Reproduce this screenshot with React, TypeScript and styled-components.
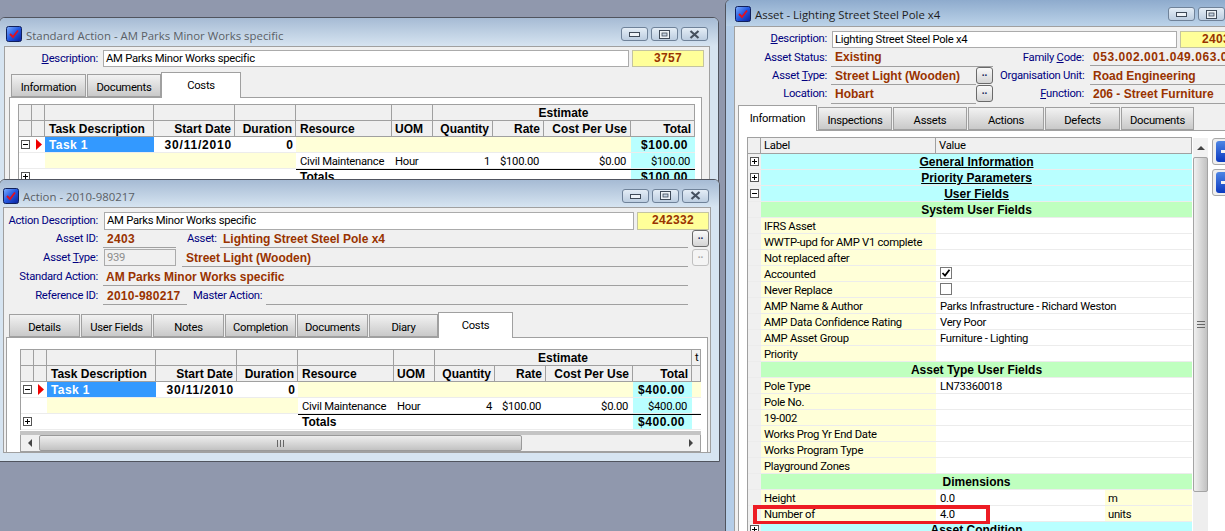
import React from "react";
import styled, { createGlobalStyle } from "styled-components";

const UI = '"Liberation Sans", Arial, sans-serif';
const TEXT = 'Roboto, "Liberation Sans", Arial, sans-serif';
const LINE = "#a0a0a0";
const CREAM = "#ffffd8";
const CYAN = "#b9ffff";
const GREEN = "#bfffbf";
const BROWN = "#993300";
const BOLD = `font-family: ${UI}; font-size: 12px; font-weight: 700; letter-spacing: 0;`;
const PLAIN = `font-family: ${TEXT}; font-size: 11.25px; font-weight: 400; letter-spacing: -0.27px;`;

const Global = createGlobalStyle`
  html, body { margin: 0; padding: 0; background: #9098ad; overflow: hidden; }
  * { box-sizing: border-box; }
`;

const Desktop = styled.div`
  position: relative;
  width: 1225px;
  height: 531px;
  overflow: hidden;
  background: #9098ad;
  ${PLAIN}
  line-height: 15px;
  color: #000;
`;

const Shell = styled.section<{ $x: number; $y: number; $w: number; $h: number; $active?: boolean }>`
  position: absolute;
  left: ${(p) => p.$x}px;
  top: ${(p) => p.$y}px;
  width: ${(p) => p.$w}px;
  height: ${(p) => p.$h}px;
  display: flex;
  flex-direction: column;
  border: 1px solid #50545e;
  border-radius: 6px 6px 0 0;
  background: ${(p) => (p.$active ? "#b4cde8" : "#d6e4f1")};
  overflow: hidden;
`;

const TitleBar = styled.header<{ $h: number; $pad: number; $pt: number; $active?: boolean }>`
  flex: none;
  height: ${(p) => p.$h}px;
  display: flex;
  align-items: center;
  padding: ${(p) => p.$pt}px 10px 0 ${(p) => p.$pad}px;
  background: ${(p) =>
    p.$active
      ? "linear-gradient(#8eabcd, #bcd3e9)"
      : "linear-gradient(#a6bbd4, #d6e4f1)"};
`;

const TitleText = styled.h1<{ $active?: boolean; $tp: number }>`
  flex: 1;
  margin: 0 0 0 4px;
  padding-top: ${(p) => p.$tp}px;
  font: 400 11.4px/16px "Open Sans", ${UI};
  letter-spacing: 0;
  color: ${(p) => (p.$active ? "#1d1d1d" : "#5a5f66")};
  white-space: nowrap;
`;

const Controls = styled.div`
  display: flex;
  gap: 3px;
`;

const ControlButton = styled.div`
  width: 27px;
  height: 14px;
  display: flex;
  align-items: center;
  justify-content: center;
  border: 1px solid #6f8299;
  border-radius: 3px;
  background: linear-gradient(#e4edf6, #bccde0);
`;

const Client = styled.main<{ $ml: number; $bottom?: number }>`
  flex: 1;
  min-height: 0;
  margin: 0 8px ${(p) => p.$bottom ?? 0}px ${(p) => p.$ml}px;
  border: 1px solid ${LINE};
  background: #f0f0f0;
  overflow: hidden;
`;

const FormBlock = styled.div<{ $pt: number }>`
  padding-top: ${(p) => p.$pt}px;
  display: flex;
  flex-direction: column;
`;

const FormRows = styled.div`
  display: flex;
  flex-direction: column;
  gap: 1px;
`;

const FieldRow = styled.div<{ $h?: number }>`
  display: flex;
  align-items: flex-start;
  height: ${(p) => p.$h ?? 18}px;
`;

const FieldGroup = styled.div<{ $w: number }>`
  flex: none;
  width: ${(p) => p.$w}px;
  display: flex;
  align-items: flex-start;
`;

const Label = styled.label<{ $w: number; $ml?: number; $lh?: number }>`
  flex: none;
  width: ${(p) => p.$w}px;
  margin-left: ${(p) => p.$ml ?? 0}px;
  color: #000080;
  text-align: right;
  white-space: nowrap;
  line-height: ${(p) => p.$lh ?? 18}px;
  u { text-underline-offset: 1px; }
`;

const TextBox = styled.div<{ $w: number; $ml: number; $h?: number }>`
  flex: none;
  width: ${(p) => p.$w}px;
  height: ${(p) => p.$h ?? 17}px;
  margin-left: ${(p) => p.$ml}px;
  padding-left: 2px;
  border: 1px solid #ababab;
  background: #fff;
  line-height: 15px;
  white-space: nowrap;
`;

const DisabledBox = styled(TextBox)`
  background: #f0f0f0;
  color: #8d8d8d;
`;

const IdBox = styled.div<{ $h?: number }>`
  flex: none;
  width: 72px;
  height: ${(p) => p.$h ?? 17}px;
  margin-left: 3px;
  border: 1px solid #c4c4a0;
  background: #ffff99;
  color: ${BROWN};
  ${BOLD}
  letter-spacing: 0.3px;
  text-align: center;
  line-height: 15px;
`;

const Value = styled.div<{ $w?: number; $ml: number; $pl?: number; $h?: number; $lh?: number; $ls?: number }>`
  flex: ${(p) => (p.$w ? "none" : "1")};
  width: ${(p) => (p.$w ? `${p.$w}px` : "auto")};
  height: ${(p) => p.$h ?? 18}px;
  margin-left: ${(p) => p.$ml}px;
  padding-left: ${(p) => p.$pl ?? 4}px;
  border-bottom: 1px solid ${LINE};
  color: ${BROWN};
  ${BOLD}
  letter-spacing: ${(p) => p.$ls ?? 0}px;
  line-height: ${(p) => p.$lh ?? 18}px;
  white-space: nowrap;
`;

const DotsButton = styled.button<{ $ml?: number; $off?: boolean }>`
  flex: none;
  width: 17px;
  height: 17px;
  margin-left: ${(p) => p.$ml ?? 0}px;
  padding: 0 0 5px;
  border: 1px solid ${(p) => (p.$off ? "#c0c0c0" : "#6a6a6a")};
  border-radius: 3px;
  background: ${(p) => (p.$off ? "#f4f4f4" : "linear-gradient(#fafafa, #d4d4d4)")};
  color: ${(p) => (p.$off ? "#a8a8a8" : "#1c2c5c")};
  font: 700 10px/10px ${UI};
`;

const TabBar = styled.nav<{ $mt: number; $ml: number }>`
  display: flex;
  align-items: flex-end;
  gap: 1px;
  height: 25px;
  margin: ${(p) => p.$mt}px 0 0 ${(p) => p.$ml}px;
  position: relative;
  z-index: 1;
`;

const Tab = styled.div<{ $w: number; $active?: boolean }>`
  flex: none;
  width: ${(p) => p.$w}px;
  height: ${(p) => (p.$active ? 26 : 23)}px;
  margin: 0 0 ${(p) => (p.$active ? -1 : 0)}px ${(p) => (p.$active ? -1 : 0)}px;
  border: 1px solid ${LINE};
  border-bottom: ${(p) => (p.$active ? "none" : `1px solid ${LINE}`)};
  background: ${(p) => (p.$active ? "#fff" : "linear-gradient(#f2f2f2, #c9c9c9)")};
  text-align: center;
  line-height: ${(p) => (p.$active ? 25 : 26)}px;
  white-space: nowrap;
  overflow: hidden;
`;

const Pane = styled.div<{ $ml: number; $w: number; $pt: number; $pl: number }>`
  width: ${(p) => p.$w}px;
  height: 500px;
  margin-left: ${(p) => p.$ml}px;
  padding: ${(p) => p.$pt}px 0 0 ${(p) => p.$pl}px;
  border: 1px solid ${LINE};
  background: #fff;
`;

const Grid = styled.div<{ $cols: string }>`
  display: grid;
  grid-template-columns: ${(p) => p.$cols};
  grid-auto-rows: 16px;
  width: max-content;
  border-top: 1px solid ${LINE};
  border-left: 1px solid ${LINE};
`;

const Head = styled.div<{ $span?: number; $align?: string; $plain?: boolean; $pl?: number }>`
  grid-column: span ${(p) => p.$span ?? 1};
  padding: 0 3px 0 ${(p) => p.$pl ?? 3}px;
  border-right: 1px solid ${LINE};
  border-bottom: 1px solid ${LINE};
  background: #f0f0f0;
  ${(p) => (p.$plain ? PLAIN : BOLD)}
  line-height: 16px;
  text-align: ${(p) => p.$align ?? "left"};
  white-space: nowrap;
  overflow: hidden;
`;

const Cell = styled.div<{
  $span?: number;
  $bg?: string;
  $align?: string;
  $bold?: boolean;
  $pl?: number;
  $pr?: number;
  $top?: boolean;
  $fg?: string;
  $under?: boolean;
  $ls?: number;
}>`
  grid-column: span ${(p) => p.$span ?? 1};
  padding: 0 ${(p) => p.$pr ?? 3}px 0 ${(p) => p.$pl ?? 3}px;
  border-bottom: 1px solid #ececec;
  border-top: ${(p) => (p.$top ? "1px solid #000" : "none")};
  background: ${(p) => p.$bg ?? "#fff"};
  color: ${(p) => p.$fg ?? "#000"};
  ${(p) => (p.$bold ? BOLD : PLAIN)}
  ${(p) => (p.$ls !== undefined ? `letter-spacing: ${p.$ls}px;` : "")}
  text-align: ${(p) => p.$align ?? "left"};
  text-decoration: ${(p) => (p.$under ? "underline" : "none")};
  line-height: ${(p) => (p.$top ? 15 : p.$bold ? 16 : 18)}px;
  white-space: nowrap;
  overflow: hidden;
`;

const IconCell = styled.div<{ $bg?: string }>`
  display: flex;
  align-items: center;
  justify-content: center;
  background: ${(p) => p.$bg ?? "#fff"};
  border-bottom: 1px solid #ececec;
`;

const BarDivider = styled.div<{ $w: number }>`
  width: ${(p) => p.$w}px;
  height: 4px;
  margin-top: 1px;
  background: #c4c4c4;
`;

const HScroll = styled.div<{ $w: number }>`
  display: flex;
  align-items: stretch;
  width: ${(p) => p.$w}px;
  height: 17px;
  border: 1px solid ${LINE};
  border-top: none;
  background: #f0f0f0;
`;

const ScrollEnd = styled.div<{ $w: number }>`
  flex: none;
  width: ${(p) => p.$w}px;
  display: flex;
  align-items: center;
  justify-content: center;
`;

const HThumb = styled.div`
  flex: none;
  width: 483px;
  display: flex;
  align-items: center;
  justify-content: center;
  border: 1px solid #9a9a9a;
  border-radius: 2px;
  background: linear-gradient(#eeeeee, #c2c2c2);
`;

const Spacer = styled.div`
  flex: 1;
`;

const GridWrap = styled.div`
  display: flex;
  align-items: flex-start;
`;

const VScroll = styled.div`
  flex: none;
  width: 15px;
  height: 400px;
  margin: 1px 0 0 1px;
  display: flex;
  flex-direction: column;
  background: #eeeeee;
`;

const VArrow = styled.div`
  height: 19px;
  display: flex;
  align-items: center;
  justify-content: center;
  background: #f2f2f2;
`;

const VThumb = styled.div`
  height: 335px;
  display: flex;
  align-items: center;
  justify-content: center;
  border: 1px solid #a4a4a4;
  border-radius: 2px;
  background: linear-gradient(90deg, #f0f0f0, #c2c2c2);
`;

const SideButtons = styled.div`
  flex: none;
  margin: 1px 0 0 4px;
  display: flex;
  flex-direction: column;
  gap: 4px;
`;

const SideButton = styled.div`
  width: 30px;
  height: 27px;
  padding: 2px 3px;
  border: 1px solid #a8a8a8;
  border-radius: 3px;
  background: #eee;
`;

const SideFace = styled.div`
  width: 100%;
  height: 100%;
  padding-left: 5px;
  border-radius: 3px;
  background: linear-gradient(#4f86e4, #0b39c0);
  display: flex;
  align-items: center;
  justify-content: flex-start;
`;

const SideBar = styled.div`
  width: 12px;
  height: 3px;
  background: #f3f3f3;
`;

const CheckFrame = styled.div`
  width: 12px;
  height: 12px;
  margin-top: 1px;
  border: 1px solid #777;
  background: #fff;
  display: flex;
  align-items: center;
  justify-content: center;
`;

const Callout = styled.div`
  position: absolute;
  left: 753px;
  top: 505px;
  width: 237px;
  height: 19px;
  border: 4px solid #ed1c24;
  border-bottom-width: 3px;
  z-index: 9;
  pointer-events: none;
`;

const AppIcon = ({ id }: { id: string }) => (
  <svg width="16" height="16" viewBox="0 0 16 16" style={{ flex: "none" }}>
    <defs>
      <linearGradient id={id} x1="0" y1="0" x2="1" y2="1">
        <stop offset="0" stopColor="#7fb0ff" />
        <stop offset="0.5" stopColor="#2358e0" />
        <stop offset="1" stopColor="#0a1f9c" />
      </linearGradient>
    </defs>
    <rect x="0.5" y="0.5" width="15" height="15" rx="2" fill={`url(#${id})`} stroke="#10205c" />
    <path d="M4 8 L7 11 L12 4.5" fill="none" stroke="#e01020" strokeWidth="1.9" />
  </svg>
);

const MinGlyph = () => (
  <svg width="11" height="6" viewBox="0 0 11 6"><rect x="0.5" y="1.5" width="10" height="4" fill="#eef3f8" stroke="#3f4a58" /></svg>
);
const MaxGlyph = () => (
  <svg width="11" height="9" viewBox="0 0 11 9"><rect x="0.5" y="0.5" width="10" height="8" fill="#eef3f8" stroke="#3f4a58" /><rect x="3" y="3" width="5" height="3" fill="#c5d3e2" stroke="#3f4a58" strokeWidth="0.8" /></svg>
);
const CloseGlyph = () => (
  <svg width="11" height="9" viewBox="0 0 11 9"><path d="M1.5 1 L9.5 8 M9.5 1 L1.5 8" stroke="#46515f" strokeWidth="2.2" /></svg>
);

const Expander = ({ open }: { open?: boolean }) => (
  <svg width="9" height="9" viewBox="0 0 9 9">
    <rect x="0.5" y="0.5" width="8" height="8" fill="#fff" stroke="#555" />
    <path d={open ? "M2 4.5H7" : "M2 4.5H7M4.5 2V7"} stroke="#000" />
  </svg>
);

const Pointer = () => (
  <svg width="6" height="11" viewBox="0 0 6 11"><path d="M0 0 L6 5.5 L0 11Z" fill="#f00000" /></svg>
);

const Arrow = ({ dir }: { dir: "left" | "right" | "up" }) => {
  const d = dir === "left" ? "M4 0V8L0 4Z" : dir === "right" ? "M0 0V8L4 4Z" : "M0 4H8L4 0Z";
  const w = dir === "up" ? 8 : 4;
  const h = dir === "up" ? 4 : 8;
  return (
    <svg width={w} height={h} viewBox={`0 0 ${w} ${h}`}><path d={d} fill="#444" /></svg>
  );
};

const Grip = ({ vertical }: { vertical?: boolean }) => (
  <svg width="8" height="7" viewBox="0 0 8 7">
    <path d={vertical ? "M0 .5H8M0 3.5H8M0 6.5H8" : "M.5 0V7M3.5 0V7M6.5 0V7"} stroke="#666" />
  </svg>
);

const CheckMark = () => (
  <svg width="10" height="10" viewBox="0 0 10 10"><path d="M1.5 5 L4 7.6 L8.5 1.8" fill="none" stroke="#000" strokeWidth="1.8" /></svg>
);

const WindowFrame = ({
  title, iconId, x, y, w, h, titleH, titlePt, textPt, pad, active, children,
}: {
  title: string; iconId: string; x: number; y: number; w: number; h: number; titleH: number; titlePt: number; textPt: number; pad: number; active?: boolean; children: React.ReactNode;
}) => (
  <Shell $x={x} $y={y} $w={w} $h={h} $active={active}>
    <TitleBar $h={titleH} $pad={pad} $pt={titlePt} $active={active}>
      <AppIcon id={iconId} />
      <TitleText $active={active} $tp={textPt}>{title}</TitleText>
      <Controls>
        <ControlButton><MinGlyph /></ControlButton>
        <ControlButton><MaxGlyph /></ControlButton>
        <ControlButton><CloseGlyph /></ControlButton>
      </Controls>
    </TitleBar>
    {children}
  </Shell>
);

const CostGrid = ({
  cols, date, qty, total, extra,
}: { cols: string; date: string; qty: string; total: string; extra?: boolean }) => (
  <Grid $cols={cols}>
    <Head /><Head /><Head /><Head /><Head /><Head /><Head />
    <Head $span={4} $align="center">Estimate</Head>
    {extra && <Head $plain $align="left">t</Head>}

    <Head /><Head />
    <Head $pl={4}>Task Description</Head>
    <Head $align="right">Start Date</Head>
    <Head $align="right">Duration</Head>
    <Head $pl={4}>Resource</Head>
    <Head>UOM</Head>
    <Head $align="right">Quantity</Head>
    <Head $align="right">Rate</Head>
    <Head $align="right">Cost Per Use</Head>
    <Head $align="right">Total</Head>
    {extra && <Head />}

    <IconCell><Expander open /></IconCell>
    <IconCell><Pointer /></IconCell>
    <Cell $bg="#3399ff" $fg="#fff" $bold $pl={4} $ls={0.4}>Task 1</Cell>
    <Cell $bold $align="right" $ls={0.8}>{date}</Cell>
    <Cell $bold $align="right">0</Cell>
    <Cell $span={5} $bg={CREAM} />
    <Cell $bg={CYAN} $bold $align="right" $pr={7} $ls={0.5}>{total}</Cell>
    {extra && <Cell $bg={CREAM} />}

    <Cell /><Cell />
    <Cell $span={3} $bg={CREAM} />
    <Cell $pl={4}>Civil Maintenance</Cell>
    <Cell>Hour</Cell>
    <Cell $align="right">{qty}</Cell>
    <Cell $align="right" $pr={5}>$100.00</Cell>
    <Cell $align="right" $pr={5}>$0.00</Cell>
    <Cell $bg={CYAN} $align="right" $pr={5}>{total}</Cell>
    {extra && <Cell />}

    <IconCell><Expander /></IconCell>
    <Cell /><Cell /><Cell /><Cell />
    <Cell $top $bold $pl={4}>Totals</Cell>
    <Cell $top /><Cell $top /><Cell $top /><Cell $top />
    <Cell $top $bg={CYAN} $bold $align="right" $pr={7} $ls={0.5}>{total}</Cell>
    {extra && <Cell $top />}
  </Grid>
);

type PropRow =
  | { kind: "section"; text: string; exp: "open" | "closed" }
  | { kind: "group"; text: string }
  | { kind: "item"; label: string; value?: string; unit?: string; check?: "on" | "off" };

const assetRows: PropRow[] = [
  { kind: "section", text: "General Information", exp: "closed" },
  { kind: "section", text: "Priority Parameters", exp: "closed" },
  { kind: "section", text: "User Fields", exp: "open" },
  { kind: "group", text: "System User Fields" },
  { kind: "item", label: "IFRS Asset" },
  { kind: "item", label: "WWTP-upd for AMP V1 complete" },
  { kind: "item", label: "Not replaced after" },
  { kind: "item", label: "Accounted", check: "on" },
  { kind: "item", label: "Never Replace", check: "off" },
  { kind: "item", label: "AMP Name & Author", value: "Parks Infrastructure - Richard Weston" },
  { kind: "item", label: "AMP Data Confidence Rating", value: "Very Poor" },
  { kind: "item", label: "AMP Asset Group", value: "Furniture - Lighting" },
  { kind: "item", label: "Priority" },
  { kind: "group", text: "Asset Type User Fields" },
  { kind: "item", label: "Pole Type", value: "LN73360018" },
  { kind: "item", label: "Pole No." },
  { kind: "item", label: "19-002" },
  { kind: "item", label: "Works Prog Yr End Date" },
  { kind: "item", label: "Works Program Type" },
  { kind: "item", label: "Playground Zones" },
  { kind: "group", text: "Dimensions" },
  { kind: "item", label: "Height", value: "0.0", unit: "m" },
  { kind: "item", label: "Number of", value: "4.0", unit: "units" },
  { kind: "section", text: "Asset Condition", exp: "closed" },
];

const PropertyRow = ({ row }: { row: PropRow }) => {
  if (row.kind === "section") {
    return (
      <>
        <IconCell $bg="#f0f0f0"><Expander open={row.exp === "open"} /></IconCell>
        <Cell $span={3} $bg={CYAN} $bold $under={row.text !== "Asset Condition"} $align="center">{row.text}</Cell>
      </>
    );
  }
  if (row.kind === "group") {
    return (
      <>
        <IconCell $bg="#f0f0f0" />
        <Cell $span={3} $bg={GREEN} $bold $align="center">{row.text}</Cell>
      </>
    );
  }
  return (
    <>
      <IconCell $bg="#f0f0f0" />
      <Cell $bg={CREAM}>{row.label}</Cell>
      <Cell $pl={4} $span={row.unit ? 1 : 2}>
        {row.check ? (
          <CheckFrame>{row.check === "on" && <CheckMark />}</CheckFrame>
        ) : (
          row.value
        )}
      </Cell>
      {row.unit && <Cell $bg={CREAM}>{row.unit}</Cell>}
    </>
  );
};

export default function App() {
  return (
    <Desktop>
      <Global />

      <WindowFrame title="Standard Action - AM Parks Minor Works specific" iconId="ic1" x={-1} y={17} w={720} h={220} titleH={28} titlePt={4} textPt={3} pad={6}>
        <Client $ml={4}>
          <FormBlock $pt={3}>
            <FieldRow>
              <Label $w={93} $lh={17}><u>D</u>escription:</Label>
              <TextBox $ml={5} $w={526}>AM Parks Minor Works specific</TextBox>
              <IdBox>3757</IdBox>
            </FieldRow>
          </FormBlock>
          <TabBar $mt={4} $ml={6}>
            <Tab $w={75}>Information</Tab>
            <Tab $w={74}>Documents</Tab>
            <Tab $w={80} $active>Costs</Tab>
          </TabBar>
          <Pane $ml={4} $w={693} $pt={6} $pl={8}>
            <CostGrid cols="13px 13px 109px 81px 61px 96px 41px 60px 51px 87px 64px" date="30/11/2010" qty="1" total="$100.00" />
          </Pane>
        </Client>
      </WindowFrame>

      <WindowFrame title="Action - 2010-980217" iconId="ic2" x={-1} y={179} w={721} h={283} titleH={27} titlePt={4} textPt={3} pad={3}>
        <Client $ml={3} $bottom={8}>
          <FormBlock $pt={4}>
            <FieldRow>
              <Label $w={94} $lh={17}>Action Description:</Label>
              <TextBox $ml={6} $w={530} $h={18}>AM Parks Minor Works specific</TextBox>
              <IdBox $h={18}>242332</IdBox>
            </FieldRow>
            <FormRows>
              <FieldRow>
                <Label $w={94}>Asset ID:</Label>
                <Value $ml={5} $w={73} $ls={0.3}>2403</Value>
                <Label $ml={11} $w={28}>Asset:</Label>
                <Value $ml={5} $w={468} $pl={3}>Lighting Street Steel Pole x4</Value>
                <DotsButton $ml={4}>..</DotsButton>
              </FieldRow>
              <FieldRow>
                <Label $w={94}>Asset <u>T</u>ype:</Label>
                <DisabledBox $ml={6} $w={72} $h={17}>939</DisabledBox>
                <Value $ml={6} $w={506}>Street Light (Wooden)</Value>
                <DotsButton $ml={4} $off>..</DotsButton>
              </FieldRow>
              <FieldRow>
                <Label $w={94}>Standard Action:</Label>
                <Value $ml={5} $w={585} $pl={3}>AM Parks Minor Works specific</Value>
              </FieldRow>
              <FieldRow>
                <Label $w={94}>Reference ID:</Label>
                <Value $ml={5} $w={84} $ls={0.25}>2010-980217</Value>
                <Label $ml={6} $w={67}>Master Action:</Label>
                <Value $ml={6} $w={422} />
              </FieldRow>
            </FormRows>
          </FormBlock>
          <TabBar $mt={7} $ml={5}>
            <Tab $w={71}>Details</Tab>
            <Tab $w={71}>User Fields</Tab>
            <Tab $w={71}>Notes</Tab>
            <Tab $w={71}>Completion</Tab>
            <Tab $w={71}>Documents</Tab>
            <Tab $w={69}>Diary</Tab>
            <Tab $w={75} $active>Costs</Tab>
          </TabBar>
          <Pane $ml={2} $w={702} $pt={11} $pl={13}>
            <CostGrid cols="13px 13px 109px 81px 61px 96px 41px 60px 51px 87px 59px 9px" date="30/11/2010" qty="4" total="$400.00" extra />
            <BarDivider $w={681} />
            <HScroll $w={681}>
              <ScrollEnd $w={18}><Arrow dir="left" /></ScrollEnd>
              <HThumb><Grip /></HThumb>
              <Spacer />
              <ScrollEnd $w={18}><Arrow dir="right" /></ScrollEnd>
            </HScroll>
          </Pane>
        </Client>
      </WindowFrame>

      <WindowFrame title="Asset - Lighting Street Steel Pole x4" iconId="ic3" x={725} y={-1} w={541} h={540} titleH={26} titlePt={2} textPt={2} pad={9} active>
        <Client $ml={8}>
          <FormBlock $pt={4}>
            <FieldRow $h={18}>
              <Label $w={92} $lh={15}><u>D</u>escription:</Label>
              <TextBox $ml={5} $w={345} $h={17}>Lighting Street Steel Pole x4</TextBox>
              <IdBox>2403</IdBox>
            </FieldRow>
            <FieldRow $h={18}>
              <FieldGroup $w={265}>
                <Label $w={92} $lh={17}>Asset Status:</Label>
                <Value $ml={4} $w={162} $lh={17}>Existing</Value>
              </FieldGroup>
              <Label $w={84} $lh={17}>Family <u>C</u>ode:</Label>
              <Value $ml={6} $pl={3} $h={17} $lh={17} $ls={0.55}>053.002.001.049.063.063</Value>
            </FieldRow>
            <FieldRow $h={18}>
              <FieldGroup $w={265}>
                <Label $w={92}>Asset <u>T</u>ype:</Label>
                <Value $ml={4} $w={145}>Street Light (Wooden)</Value>
                <DotsButton>..</DotsButton>
              </FieldGroup>
              <Label $w={84}>Organisation Unit:</Label>
              <Value $ml={6} $pl={3}>Road Engineering</Value>
            </FieldRow>
            <FieldRow $h={19}>
              <FieldGroup $w={265}>
                <Label $w={92}>Location:</Label>
                <Value $ml={4} $w={145} $h={19}>Hobart</Value>
                <DotsButton>..</DotsButton>
              </FieldGroup>
              <Label $w={84}><u>F</u>unction:</Label>
              <Value $ml={6} $pl={3} $h={19}>206 - Street Furniture</Value>
            </FieldRow>
          </FormBlock>
          <TabBar $mt={1} $ml={4}>
            <Tab $w={79} $active>Information</Tab>
            <Tab $w={74}>Inspections</Tab>
            <Tab $w={74}>Assets</Tab>
            <Tab $w={76}>Actions</Tab>
            <Tab $w={75}>Defects</Tab>
            <Tab $w={73}>Documents</Tab>
          </TabBar>
          <Pane $ml={3} $w={520} $pt={6} $pl={8}>
            <GridWrap>
              <Grid $cols="13px 175px 169px 87px">
                <Head />
                <Head $plain>Label</Head>
                <Head $plain $span={2}>Value</Head>
                {assetRows.map((r, i) => (
                  <PropertyRow key={i} row={r} />
                ))}
              </Grid>
              <VScroll>
                <VArrow><Arrow dir="up" /></VArrow>
                <VThumb><Grip vertical /></VThumb>
              </VScroll>
              <SideButtons>
                <SideButton><SideFace><SideBar /></SideFace></SideButton>
                <SideButton><SideFace><SideBar /></SideFace></SideButton>
              </SideButtons>
            </GridWrap>
          </Pane>
        </Client>
      </WindowFrame>

      <Callout />
    </Desktop>
  );
}
